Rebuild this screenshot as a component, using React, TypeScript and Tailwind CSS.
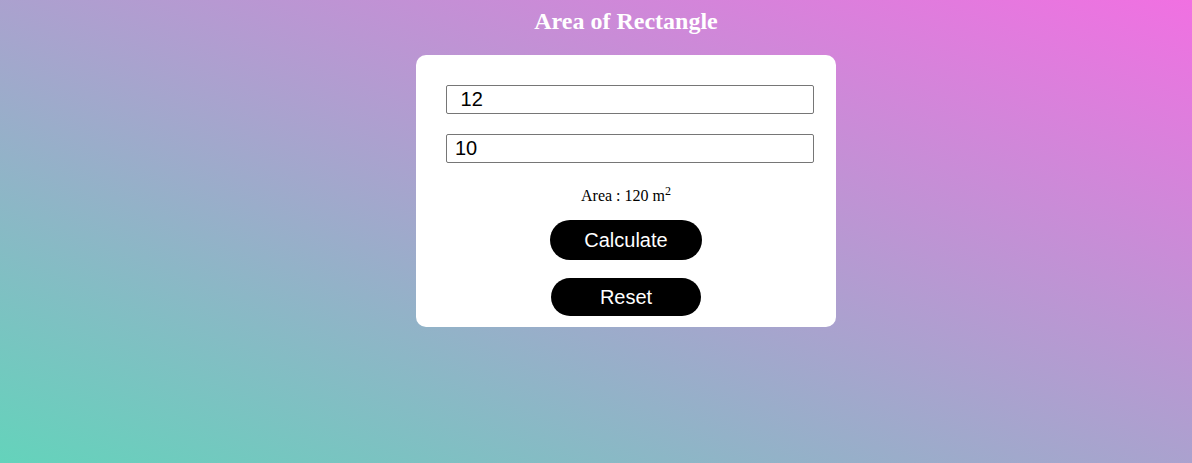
import * as React from 'react';

export default function App() {
  const [length, setLength] = React.useState(' 12');
  const [width, setWidth] = React.useState('10');
  const [area, setArea] = React.useState<number | null>(120);

  const calculate = () => {
    setArea(parseFloat(length) * parseFloat(width));
  };

  const reset = () => {
    setLength('');
    setWidth('');
    setArea(null);
  };

  return (
    <div className="w-full h-[463px] overflow-hidden bg-[linear-gradient(to_top_right,#64d3bb,#f170e2)] pl-[60px] flex flex-col items-center">
      <h2 className="mt-[7px] h-[28px] leading-[28px] text-[24px] font-bold text-white font-['Liberation_Serif',serif]">
        Area of Rectangle
      </h2>
      <div className="mt-[20px] w-[420px] bg-white rounded-[10px] pt-[30px] pb-[11px] flex flex-col items-center">
        <div className="w-full pl-[30px]">
          <input
            type="text"
            value={length}
            onChange={(e) => setLength(e.target.value)}
            className="block w-[368px] h-[29px] border border-[#767676] rounded-[2px] px-[8px] pb-[1px] text-[20px] text-black font-['Liberation_Sans',sans-serif] outline-none"
          />
          <input
            type="text"
            value={width}
            onChange={(e) => setWidth(e.target.value)}
            className="block mt-[20px] w-[368px] h-[29px] border border-[#767676] rounded-[2px] px-[8px] pb-[1px] text-[20px] text-black font-['Liberation_Sans',sans-serif] outline-none"
          />
        </div>
        <p className="mt-[24px] h-[18px] leading-[18px] text-[16px] text-black font-['Liberation_Serif',serif]">
          Area : {area ?? ''} m<sup className="text-[12px]">2</sup>
        </p>
        <button
          onClick={calculate}
          className="mt-[15px] w-[152px] h-[40px] rounded-full bg-black text-white text-[20px] font-['Liberation_Sans',sans-serif]"
        >
          Calculate
        </button>
        <button
          onClick={reset}
          className="mt-[18px] w-[150px] h-[38px] rounded-full bg-black text-white text-[20px] font-['Liberation_Sans',sans-serif]"
        >
          Reset
        </button>
      </div>
    </div>
  );
}
